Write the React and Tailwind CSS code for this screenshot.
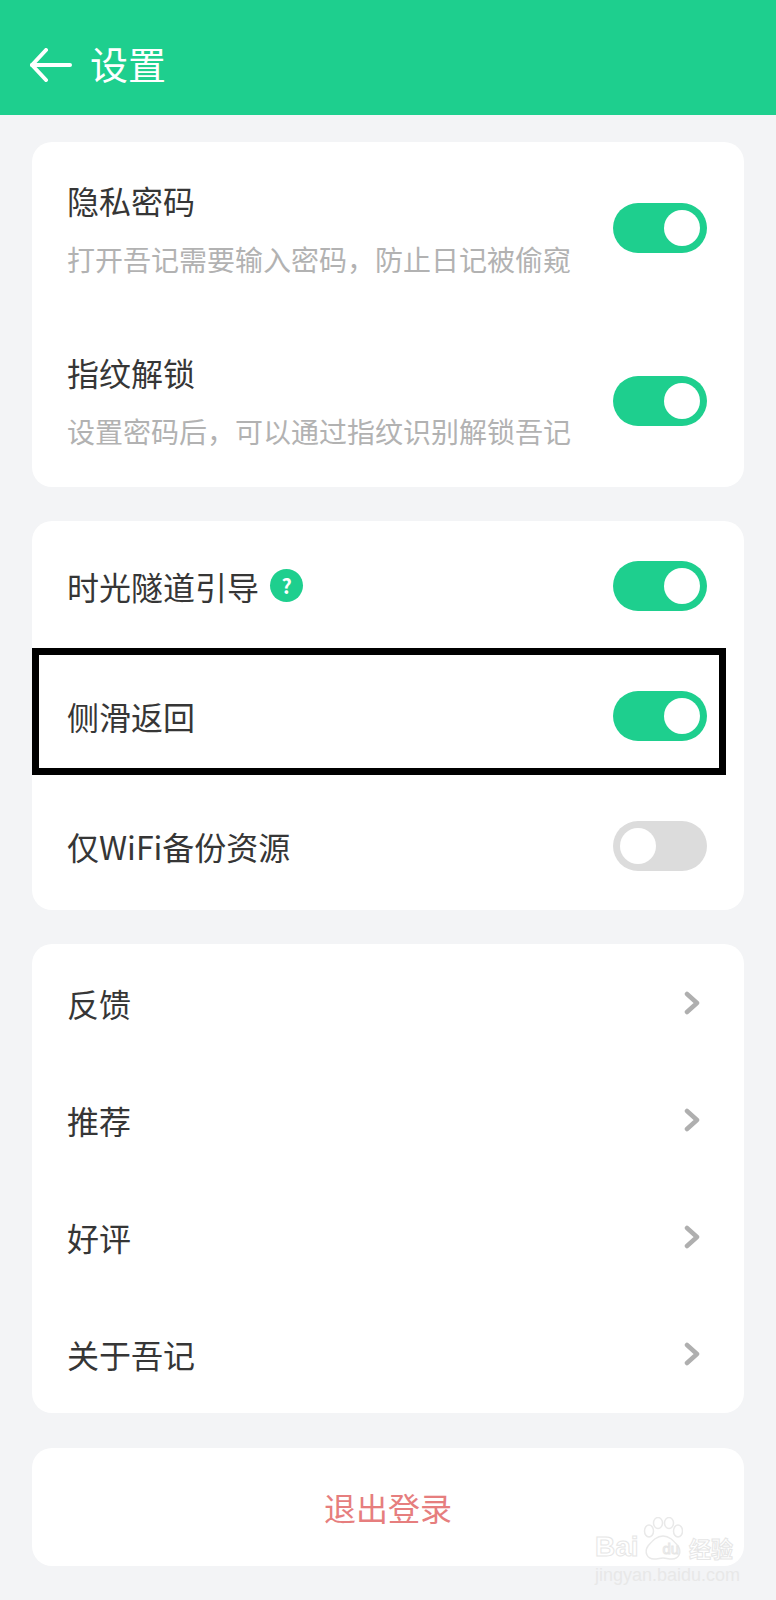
const FONT = "font-['Noto_Sans_CJK_SC','Noto_Sans',sans-serif]";

function Toggle({ on = true }) {
  return (
    <div className={`w-[94px] h-[50px] rounded-full flex items-center px-[7px] shrink-0 ${on ? "bg-[#1ecf8e] justify-end" : "bg-[#dcdcdc] justify-start"}`}>
      <div className="w-[36px] h-[36px] rounded-full bg-white" />
    </div>
  );
}

function Chevron() {
  return (
    <svg width="16" height="24" viewBox="0 0 16 24" fill="none" stroke="#afafaf" strokeWidth="4.5" strokeLinecap="round" strokeLinejoin="round">
      <path d="M3 3l10 9-10 9" />
    </svg>
  );
}

function ToggleRow({ title, sub, on = true, children, height = "h-[172.5px]" }) {
  return (
    <div className={`relative flex items-center justify-between pl-[35px] pr-[37px] ${height}`}>
      <div>
        <div className="flex items-center gap-[11px]">
          <span className="text-[32px] leading-[44px] text-[#363636]">{title}</span>
          {children}
        </div>
        {sub && <div className="text-[28px] leading-[40px] text-[#b2b2b2] mt-[17px]">{sub}</div>}
      </div>
      <Toggle on={on} />
    </div>
  );
}

function LinkRow({ title }) {
  return (
    <div className="flex items-center justify-between h-[117.25px] pl-[35px] pr-[44px]">
      <span className="text-[32px] leading-[44px] text-[#363636]">{title}</span>
      <Chevron />
    </div>
  );
}

function Watermark() {
  return (
    <div className="absolute left-[595px] top-[1517px] w-[138px] pointer-events-none">
      <svg className="absolute left-[48px] top-0" width="40" height="44" viewBox="0 0 40 44" fill="none" stroke="#e9e9e9" strokeWidth="1.5">
        <ellipse cx="6" cy="14" rx="4.5" ry="6" />
        <ellipse cx="15" cy="6" rx="4.5" ry="5.5" />
        <ellipse cx="26" cy="6" rx="4.5" ry="5.5" />
        <ellipse cx="35" cy="14" rx="4.5" ry="6" />
        <path d="M20 19c6 0 10 4 15 10 4 6 1 13-6 13-4 0-6-1-9-1s-5 1-9 1c-7 0-10-7-6-13 5-6 9-10 15-10z" />
      </svg>
      <div className="relative flex items-center justify-between h-[24px] mt-[18px] text-transparent [-webkit-text-stroke:1px_#e6e6e6]">
        <span className="font-['Liberation_Sans',sans-serif] text-[28px] leading-[24px] font-bold">Bai</span>
        <span className="font-['Liberation_Sans',sans-serif] text-[15px] leading-[24px] mt-[4px] ml-[14px]">du</span>
        <span className="text-[22px] leading-[24px] font-bold">经验</span>
      </div>
      <div className="font-['Liberation_Sans',sans-serif] text-[18px] leading-[20px] mt-[6px] whitespace-nowrap text-[#e8e8e8]">jingyan.baidu.com</div>
    </div>
  );
}

export default function App() {
  return (
    <div className={`relative w-[776px] h-[1600px] overflow-hidden bg-[#f3f4f6] ${FONT}`}>
      <header className="h-[115px] bg-[#1ecf8e] flex items-center gap-[20px] pl-[30px] pt-[14px] box-border">
        <svg width="42" height="34" viewBox="0 0 42 34" fill="none" stroke="white" strokeWidth="4" strokeLinecap="round" strokeLinejoin="round">
          <path d="M16 2L2 17l14 15" />
          <path d="M2 17h38" />
        </svg>
        <h1 className="text-[38px] leading-[48px] text-white -ml-[2px] -mt-[3px]">设置</h1>
      </header>

      <main className="flex flex-col gap-[34px] px-[32px] pt-[27px]">
        <section className="bg-white rounded-[20px]">
          <ToggleRow title="隐私密码" sub="打开吾记需要输入密码，防止日记被偷窥" />
          <ToggleRow title="指纹解锁" sub="设置密码后，可以通过指纹识别解锁吾记" />
        </section>

        <section className="bg-white rounded-[20px]">
          <ToggleRow title="时光隧道引导" height="h-[129px]">
            <span className="w-[33px] h-[33px] rounded-full bg-[#1ecf8e] text-white text-[20px] leading-[33px] font-bold text-center">?</span>
          </ToggleRow>
          <ToggleRow title="侧滑返回" height="h-[131px]">
            <div className="absolute left-0 top-[-2px] w-[694px] h-[127px] border-[7px] border-black" />
          </ToggleRow>
          <ToggleRow title="仅WiFi备份资源" on={false} height="h-[129px]" />
        </section>

        <section className="bg-white rounded-[20px]">
          <LinkRow title="反馈" />
          <LinkRow title="推荐" />
          <LinkRow title="好评" />
          <LinkRow title="关于吾记" />
        </section>

        <section className="bg-white rounded-[20px] h-[118px] mt-[1px] flex items-center justify-center">
          <span className="text-[32px] leading-[44px] text-[#e67e7e]">退出登录</span>
        </section>
      </main>

      <Watermark />
    </div>
  );
}
